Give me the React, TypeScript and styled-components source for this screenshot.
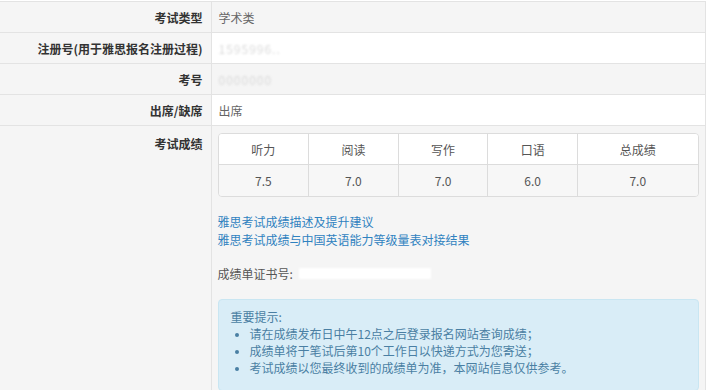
import React from "react";
import styled, { createGlobalStyle } from "styled-components";

const GlobalStyle = createGlobalStyle`
	html, body {
		margin: 0;
		padding: 0;
		background: #fff;
	}
	body {
		font-family: "Noto Sans CJK SC", "Noto Sans", "Liberation Sans", sans-serif;
		font-size: 12px;
		line-height: 17px;
		color: #555;
		overflow: hidden;
	}
`;

const Page = styled.div`
	width: 720px;
	height: 390px;
	padding-top: 1px;
	box-sizing: border-box;
`;

const InfoTable = styled.table`
	width: 706px;
	table-layout: fixed;
	border-collapse: collapse;
	border-top: 1px solid #e3e3e3;
	border-right: 1px solid #e3e3e3;
`;

const Row = styled.tr<{ $striped?: boolean }>`
	border-bottom: 1px solid #e3e3e3;

	td {
		background: ${(p) => (p.$striped ? "#f5f5f5" : "#fff")};
	}
`;

const Th = styled.th<{ $top?: boolean }>`
	width: 211px;
	height: 31px;
	padding: ${(p) => (p.$top ? "9px 8px 0 0" : "0 8px 0 0")};
	box-sizing: border-box;
	background: #f5f5f5;
	border-right: 1px solid #e3e3e3;
	text-align: right;
	vertical-align: ${(p) => (p.$top ? "top" : "middle")};
	font-weight: bold;
	color: #333;
	white-space: nowrap;
`;

const Td = styled.td<{ $top?: boolean }>`
	height: 31px;
	padding: ${(p) => (p.$top ? "7px 8px 6px 6px" : "0 8px 0 7px")};
	box-sizing: border-box;
	vertical-align: ${(p) => (p.$top ? "top" : "middle")};
	color: #666;
`;

const Masked = styled.span`
	color: #dadada;
	letter-spacing: 1px;
	filter: blur(1px);
`;

const ScoreTable = styled.table`
	width: 481px;
	border-collapse: separate;
	border-spacing: 0;
	border: 1px solid #dcdcdc;
	border-radius: 4px;
	overflow: hidden;
`;

const ScoreHead = styled.th<{ $w: number; $last?: boolean }>`
	width: ${(p) => p.$w}px;
	height: 30px;
	padding: 0;
	background: #fff;
	font-weight: normal;
	color: #555;
	text-align: center;
	border-right: ${(p) => (p.$last ? "none" : "1px solid #dcdcdc")};
	border-bottom: 1px solid #dcdcdc;
`;

const ScoreCell = styled.td<{ $last?: boolean }>`
	height: 31px;
	padding: 0;
	text-align: center;
	color: #555;
	background: #f7f7f7 !important;
	border-right: ${(p) => (p.$last ? "none" : "1px solid #dcdcdc")};
`;

const Links = styled.div`
	margin-top: 16px;
	display: flex;
	flex-direction: column;
	line-height: 18px;
`;

const Link = styled.a`
	color: #2f82c0;
	text-decoration: none;
`;

const CertLine = styled.div`
	margin-top: 16px;
	display: flex;
	align-items: center;
	color: #555;
	line-height: 17px;
`;

const CertMask = styled.span`
	display: inline-block;
	width: 132px;
	height: 11px;
	margin-left: 6px;
	background: #fff;
	filter: blur(1px);
`;

const Alert = styled.div`
	width: 481px;
	box-sizing: border-box;
	margin-top: 17px;
	padding: 8px 12px 14px 12px;
	background: #d9edf7;
	border: 1px solid #c9e6f2;
	border-radius: 4px;
	color: #4a7fa3;
`;

const AlertList = styled.ul`
	margin: 0;
	padding-left: 19px;

	li::marker {
		font-size: 10px;
	}
`;

const scores = [
	{ name: "听力", value: "7.5", w: 90 },
	{ name: "阅读", value: "7.0", w: 89 },
	{ name: "写作", value: "7.0", w: 89 },
	{ name: "口语", value: "6.0", w: 89 },
	{ name: "总成绩", value: "7.0", w: 120 },
];

const tips = [
	"请在成绩发布日中午12点之后登录报名网站查询成绩；",
	"成绩单将于笔试后第10个工作日以快递方式为您寄送；",
	"考试成绩以您最终收到的成绩单为准，本网站信息仅供参考。",
];

const App = () => {
	return (
		<Page>
			<GlobalStyle />
			<InfoTable>
				<tbody>
					<Row $striped>
						<Th>考试类型</Th>
						<Td>学术类</Td>
					</Row>
					<Row>
						<Th>注册号(用于雅思报名注册过程)</Th>
						<Td>
							<Masked>1595996..</Masked>
						</Td>
					</Row>
					<Row $striped>
						<Th>考号</Th>
						<Td>
							<Masked>0000000</Masked>
						</Td>
					</Row>
					<Row>
						<Th>出席/缺席</Th>
						<Td>出席</Td>
					</Row>
					<Row $striped>
						<Th $top>考试成绩</Th>
						<Td $top>
							<ScoreTable>
								<thead>
									<tr>
										{scores.map((s, i) => (
											<ScoreHead key={s.name} $w={s.w} $last={i === scores.length - 1}>
												{s.name}
											</ScoreHead>
										))}
									</tr>
								</thead>
								<tbody>
									<tr>
										{scores.map((s, i) => (
											<ScoreCell key={s.name} $last={i === scores.length - 1}>
												{s.value}
											</ScoreCell>
										))}
									</tr>
								</tbody>
							</ScoreTable>
							<Links>
								<Link href="#">雅思考试成绩描述及提升建议</Link>
								<Link href="#">雅思考试成绩与中国英语能力等级量表对接结果</Link>
							</Links>
							<CertLine>
								成绩单证书号:
								<CertMask />
							</CertLine>
							<Alert>
								重要提示:
								<AlertList>
									{tips.map((t) => (
										<li key={t}>{t}</li>
									))}
								</AlertList>
							</Alert>
						</Td>
					</Row>
				</tbody>
			</InfoTable>
		</Page>
	);
};

export default App;
